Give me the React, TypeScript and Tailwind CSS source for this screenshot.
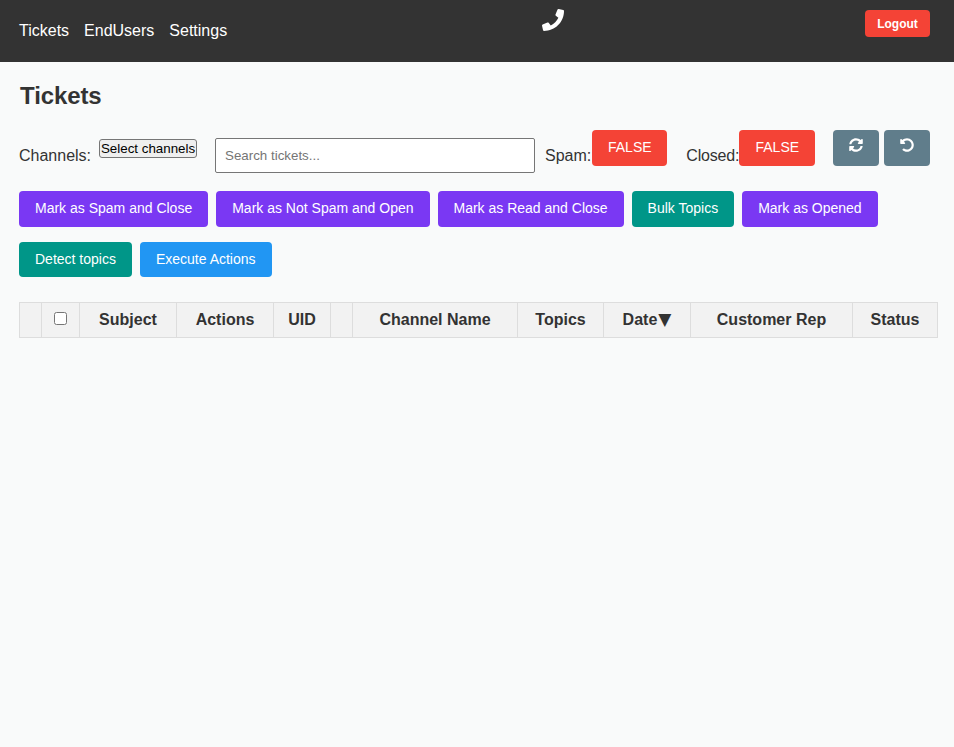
import { FaPhone, FaSyncAlt, FaUndoAlt } from "react-icons/fa";

const actionClass = "h-9 rounded-[4px] px-4 pb-[2px] text-sm text-white";
const purple = `${actionClass} bg-[#7a38f3]`;

const columns = [
  { label: "", w: "w-[22px]" },
  { label: "check", w: "w-[38px]" },
  { label: "Subject", w: "w-[97px]" },
  { label: "Actions", w: "w-[97px]" },
  { label: "UID", w: "w-[57px]" },
  { label: "", w: "w-[22px]" },
  { label: "Channel Name", w: "w-[165px]" },
  { label: "Topics", w: "w-[86px]" },
  { label: "date", w: "w-[87px]" },
  { label: "Customer Rep", w: "w-[162px]" },
  { label: "Status", w: "w-[85px]" },
];

export default function App() {
  return (
    <div className="min-h-[747px] bg-[#f9fafa] font-['Liberation_Sans',Arial,sans-serif] text-[#333333]">
      <header className="flex h-[62px] items-start justify-between bg-[#333333] pl-[19px] pr-6">
        <nav className="flex gap-[15px] pt-[22px] text-base leading-[18px] text-white">
          <a>Tickets</a>
          <a>EndUsers</a>
          <a>Settings</a>
        </nav>
        <FaPhone className="ml-[13px] mt-[9px] h-[22px] w-[22px] text-white" />
        <button className="mt-[10px] h-[27px] w-[65px] rounded-[4px] bg-[#f44336] text-xs font-bold text-white">
          Logout
        </button>
      </header>

      <main className="pl-[19px] pr-4">
        <h1 className="ml-px pt-[20px] text-2xl font-bold leading-[28px] tracking-[-0.1px]">Tickets</h1>

        <div className="mt-[20px] flex h-[43px] items-start">
          <span className="mt-[17px] text-base leading-[18px]">Channels:</span>
          <button className="ml-2 mt-[9px] h-[19px] w-[98px] rounded-[3px] border border-[#767676] bg-[#efefef] text-[13.33px] leading-none text-black">
            Select channels
          </button>
          <input
            className="ml-[18px] mt-2 h-[35px] w-[320px] rounded-[2px] border border-[#767676] bg-white px-[9px] text-[13.33px] text-black placeholder:text-[#757575]"
            placeholder="Search tickets..."
          />
          <span className="ml-[10px] mt-[17px] text-base leading-[18px]">Spam:</span>
          <button className="ml-px h-9 w-[75px] rounded-[4px] bg-[#f44336] pb-[3px] text-sm text-white">FALSE</button>
          <span className="ml-[19px] mt-[17px] w-[53px] whitespace-nowrap text-base leading-[18px] tracking-[-0.2px]">Closed:</span>
          <button className="h-9 w-[76px] rounded-[4px] bg-[#f44336] pb-[3px] text-sm text-white">FALSE</button>
          <button className="ml-[18px] flex h-9 w-[46px] justify-center rounded-[4px] bg-[#607d8b] pt-2 text-white">
            <FaSyncAlt className="h-[14px] w-[14px]" />
          </button>
          <button className="ml-[5px] flex h-9 w-[46px] justify-center rounded-[4px] bg-[#607d8b] pt-2 text-white">
            <FaUndoAlt className="h-[14px] w-[14px]" />
          </button>
        </div>

        <div className="mt-[18px] flex gap-2">
          <button className={purple}>Mark as Spam and Close</button>
          <button className={purple}>Mark as Not Spam and Open</button>
          <button className={purple}>Mark as Read and Close</button>
          <button className={`${actionClass} bg-[#009688]`}>Bulk Topics</button>
          <button className={purple}>Mark as Opened</button>
        </div>

        <div className="mt-[15px] flex gap-2">
          <button className={`${actionClass} h-[35px] bg-[#009688]`}>Detect topics</button>
          <button className={`${actionClass} h-[35px] bg-[#2196f3]`}>Execute Actions</button>
        </div>

        <table className="mt-[25px] w-[918px] table-fixed border-collapse">
          <thead>
            <tr className="h-[35px] bg-[#f2f2f2]">
              {columns.map((c, i) => (
                <th key={i} className={`${c.w} border border-[#dddddd] p-0 pb-px text-base font-bold`}>
                  {c.label === "check" ? (
                    <input type="checkbox" className="mx-auto mb-[3px] block h-[13px] w-[13px]" />
                  ) : c.label === "date" ? (
                    <>
                      Date<span className="ml-px font-['DejaVu_Sans',sans-serif] text-[17px] leading-none">▼</span>
                    </>
                  ) : (
                    c.label
                  )}
                </th>
              ))}
            </tr>
          </thead>
        </table>
      </main>
    </div>
  );
}
